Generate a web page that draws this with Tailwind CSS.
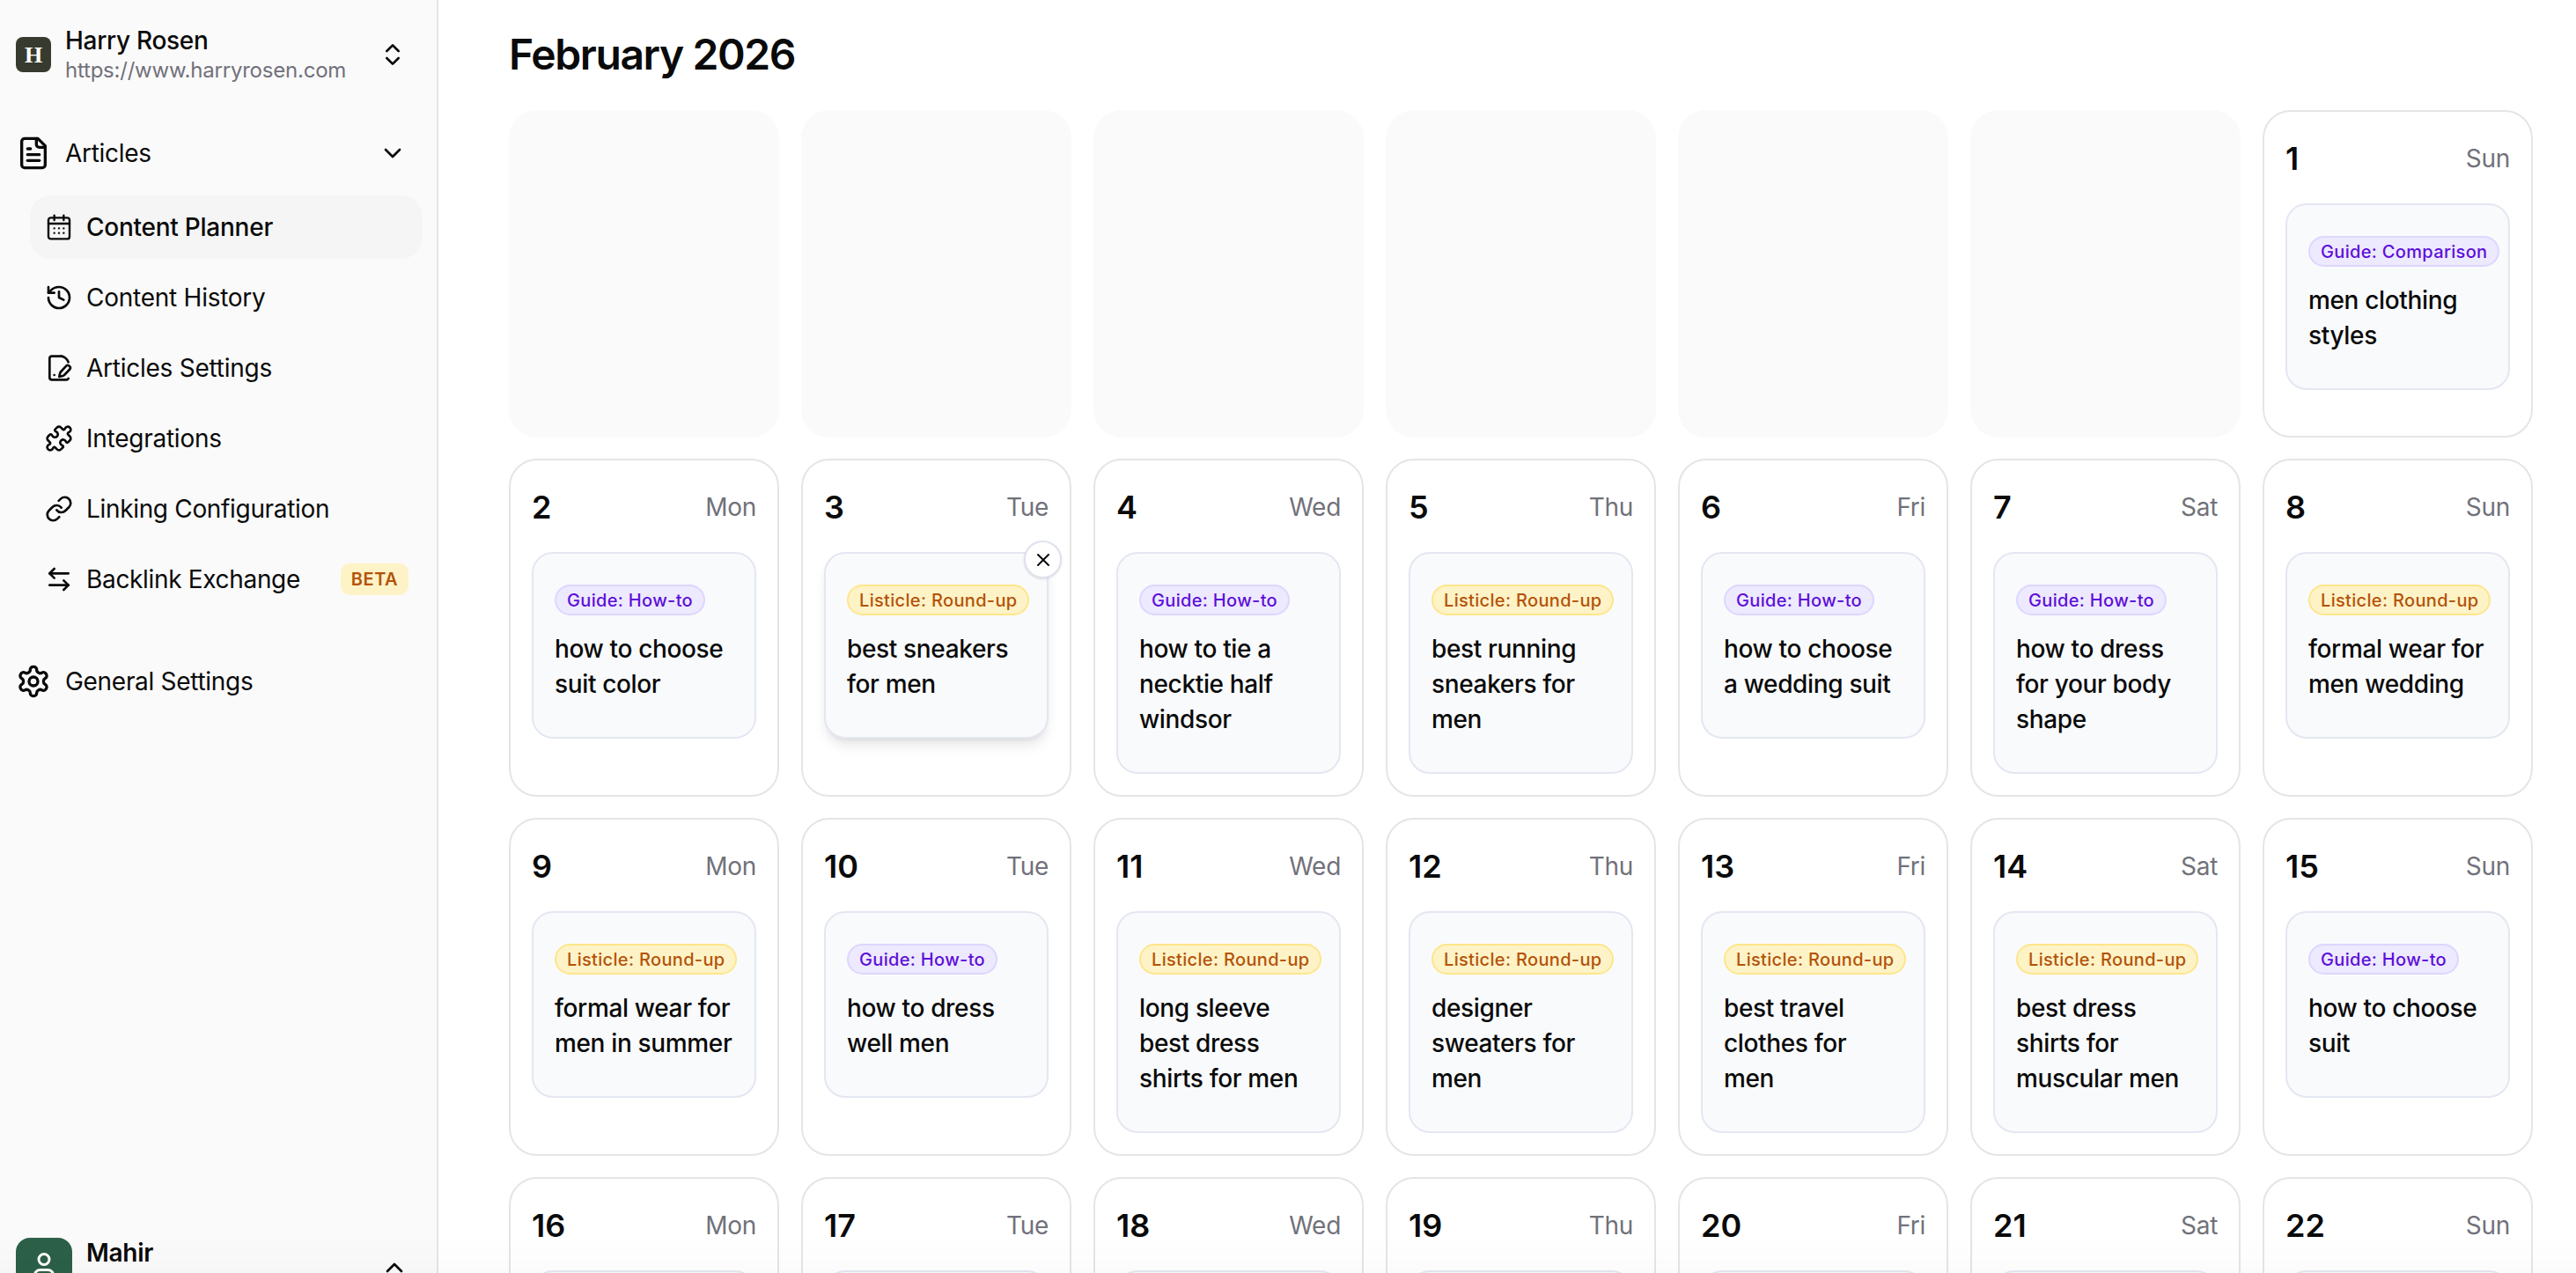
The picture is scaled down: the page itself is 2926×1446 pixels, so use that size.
<!DOCTYPE html>
<html lang="en">
<head>
    <meta charset="UTF-8">
    <title>Content Planner</title>
    <script src="https://cdn.jsdelivr.net/npm/@tailwindcss/browser@4"></script>
</head>
<body class="bg-white h-screen overflow-hidden flex text-[#0a0a0a] font-['Inter',sans-serif]">
    <aside class="w-[498px] h-[1446px] shrink-0 bg-[#fafafa] border-r-2 border-[#e5e5e5] flex flex-col relative overflow-hidden">
        <div class="flex items-center h-[68px] mt-[28px] pl-[18px] pr-[34px]">
            <div class="w-[40px] h-[40px] rounded-[8px] bg-[#373b2f] text-white flex items-center justify-center text-[26px] font-bold font-['Liberation_Serif',serif]">H</div>
            <div class="ml-[16px] flex-1 pt-[2px]">
                <div class="text-[28px] leading-[34px] font-medium tracking-[-0.3px]">Harry Rosen</div>
                <div class="text-[24px] leading-[34px] text-[#71717a] tracking-[-0.22px]">https://www.harryrosen.com</div>
            </div>
            <svg class="w-[32px] h-[32px]" viewBox="0 0 24 24" fill="none" stroke="currentColor" stroke-width="2" stroke-linecap="round" stroke-linejoin="round"><path d="m7 15 5 5 5-5"/><path d="m7 9 5-5 5 5"/></svg>
        </div>
        <div class="flex items-center h-[72px] mt-[42px] pl-[18px] pr-[34px]">
            <svg class="w-[40px] h-[40px]" viewBox="0 0 24 24" fill="none" stroke="currentColor" stroke-width="2" stroke-linecap="round" stroke-linejoin="round"><path d="M15 2H6a2 2 0 0 0-2 2v16a2 2 0 0 0 2 2h12a2 2 0 0 0 2-2V7Z"/><path d="M14 2v4a2 2 0 0 0 2 2h4"/><path d="M10 9H8"/><path d="M16 13H8"/><path d="M16 17H8"/></svg>
            <span class="ml-[16px] flex-1 text-[28px] tracking-[-0.3px]">Articles</span>
            <svg class="w-[32px] h-[32px]" viewBox="0 0 24 24" fill="none" stroke="currentColor" stroke-width="2" stroke-linecap="round" stroke-linejoin="round"><path d="m6 9 6 6 6-6"/></svg>
        </div>
        <nav class="flex flex-col gap-[8px] mt-[12px] ml-[34px] mr-[16px] tracking-[-0.25px]">
            <a class="flex items-center h-[72px] rounded-[24px] bg-[#f5f5f5] pl-[17px]">
                <svg class="w-[32px] h-[32px]" viewBox="0 0 24 24" fill="none" stroke="currentColor" stroke-width="1.8" stroke-linecap="round" stroke-linejoin="round"><rect x="3" y="4" width="18" height="18" rx="2"/><path d="M8 2v4"/><path d="M16 2v4"/><path d="M3 9h18"/><path d="M8 13h.01M12 13h.01M16 13h.01M8 17h.01M12 17h.01M16 17h.01"/></svg>
                <span class="ml-[15px] text-[28px] font-medium">Content Planner</span>
            </a>
            <a class="flex items-center h-[72px] pl-[17px]">
                <svg class="w-[32px] h-[32px]" viewBox="0 0 24 24" fill="none" stroke="currentColor" stroke-width="2" stroke-linecap="round" stroke-linejoin="round"><path d="M3 12a9 9 0 1 0 9-9 9.75 9.75 0 0 0-6.74 2.74L3 8"/><path d="M3 3v5h5"/><path d="M12 7v5l4 2"/></svg>
                <span class="ml-[15px] text-[28px]">Content History</span>
            </a>
            <a class="flex items-center h-[72px] pl-[17px]">
                <svg class="w-[32px] h-[32px]" viewBox="0 0 24 24" fill="none" stroke="currentColor" stroke-width="2" stroke-linecap="round" stroke-linejoin="round"><path d="M14 2H6a2 2 0 0 0-2 2v16a2 2 0 0 0 2 2h12a2 2 0 0 0 2-1"/><path d="M14 2c2 0 5 2 6 5"/><path d="M8 18h.01"/><path d="M21 10.5a1.9 1.9 0 0 0-2.8-.3l-4.6 5a3 3 0 0 0-.7 1.3l-.7 2.9 3-.7a3 3 0 0 0 1.3-.7l4.7-4.9a1.9 1.9 0 0 0-.2-2.6Z"/></svg>
                <span class="ml-[15px] text-[28px]">Articles Settings</span>
            </a>
            <a class="flex items-center h-[72px] pl-[17px]">
                <svg class="w-[32px] h-[32px]" viewBox="0 0 24 24" fill="none" stroke="currentColor" stroke-width="2" stroke-linecap="round" stroke-linejoin="round"><path d="M19.439 7.85c-.049.322.059.648.289.878l1.568 1.568c.47.47.706 1.087.706 1.704s-.235 1.233-.706 1.704l-1.611 1.611a.98.98 0 0 1-.837.276c-.47-.07-.802-.48-.968-.925a2.501 2.501 0 1 0-3.214 3.214c.446.166.855.497.925.968a.979.979 0 0 1-.276.837l-1.61 1.61a2.404 2.404 0 0 1-1.705.707 2.402 2.402 0 0 1-1.704-.706l-1.568-1.568a1.026 1.026 0 0 0-.877-.29c-.493.074-.84.504-1.02.968a2.5 2.5 0 1 1-3.237-3.237c.464-.18.894-.527.967-1.02a1.026 1.026 0 0 0-.289-.877l-1.568-1.568A2.402 2.402 0 0 1 1.998 12c0-.617.236-1.234.706-1.704L4.23 8.77c.24-.24.581-.353.917-.303.515.077.877.528 1.073 1.01a2.5 2.5 0 1 0 3.259-3.259c-.482-.196-.933-.558-1.01-1.073-.05-.336.062-.676.303-.917l1.525-1.525A2.402 2.402 0 0 1 12 1.998c.617 0 1.234.236 1.704.706l1.568 1.568c.23.23.556.338.877.29.493-.074.84-.504 1.02-.968a2.5 2.5 0 1 1 3.237 3.237c-.464.18-.894.527-.967 1.02Z"/></svg>
                <span class="ml-[15px] text-[28px]">Integrations</span>
            </a>
            <a class="flex items-center h-[72px] pl-[17px]">
                <svg class="w-[32px] h-[32px]" viewBox="0 0 24 24" fill="none" stroke="currentColor" stroke-width="2" stroke-linecap="round" stroke-linejoin="round"><path d="M10 13a5 5 0 0 0 7.54.54l3-3a5 5 0 0 0-7.07-7.07l-1.72 1.71"/><path d="M14 11a5 5 0 0 0-7.54-.54l-3 3a5 5 0 0 0 7.07 7.07l1.71-1.71"/></svg>
                <span class="ml-[15px] text-[28px] tracking-[-0.33px]">Linking Configuration</span>
            </a>
            <a class="flex items-center h-[72px] pl-[17px]">
                <svg class="w-[32px] h-[32px]" viewBox="0 0 24 24" fill="none" stroke="currentColor" stroke-width="2" stroke-linecap="round" stroke-linejoin="round"><path d="M8 3 4 7l4 4"/><path d="M4 7h16"/><path d="m16 21 4-4-4-4"/><path d="M20 17H4"/></svg>
                <span class="ml-[15px] text-[28px] flex-1 tracking-[-0.33px]">Backlink Exchange</span>
                <span class="w-[77px] h-[36px] mr-[16px] rounded-[10px] bg-[#fef3c7] text-[#b45309] text-[20px] font-semibold tracking-[0.5px] flex items-center justify-center">BETA</span>
            </a>
        </nav>
        <div class="flex items-center h-[72px] mt-[44px] pl-[18px] pr-[34px]">
            <svg class="w-[40px] h-[40px]" viewBox="0 0 24 24" fill="none" stroke="currentColor" stroke-width="2" stroke-linecap="round" stroke-linejoin="round"><path d="M12.22 2h-.44a2 2 0 0 0-2 2v.18a2 2 0 0 1-1 1.73l-.43.25a2 2 0 0 1-2 0l-.15-.08a2 2 0 0 0-2.73.73l-.22.38a2 2 0 0 0 .73 2.73l.15.1a2 2 0 0 1 1 1.72v.51a2 2 0 0 1-1 1.74l-.15.09a2 2 0 0 0-.73 2.73l.22.38a2 2 0 0 0 2.73.73l.15-.08a2 2 0 0 1 2 0l.43.25a2 2 0 0 1 1 1.73V20a2 2 0 0 0 2 2h.44a2 2 0 0 0 2-2v-.18a2 2 0 0 1 1-1.73l.43-.25a2 2 0 0 1 2 0l.15.08a2 2 0 0 0 2.73-.73l.22-.39a2 2 0 0 0-.73-2.73l-.15-.08a2 2 0 0 1-1-1.74v-.5a2 2 0 0 1 1-1.74l.15-.09a2 2 0 0 0 .73-2.73l-.22-.38a2 2 0 0 0-2.73-.73l-.15.08a2 2 0 0 1-2 0l-.43-.25a2 2 0 0 1-1-1.73V4a2 2 0 0 0-2-2z"/><circle cx="12" cy="12" r="3"/></svg>
            <span class="ml-[16px] text-[28px] tracking-[-0.3px]">General Settings</span>
        </div>
        <div class="absolute left-[18px] top-[1406px] flex items-start w-[446px]">
            <div class="w-[64px] h-[64px] rounded-[16px] bg-[#2c6048] flex items-center justify-center">
                <svg class="w-[36px] h-[36px]" viewBox="0 0 24 24" fill="none" stroke="white" stroke-width="2" stroke-linecap="round" stroke-linejoin="round"><circle cx="12" cy="7" r="4"/><path d="M19 21v-2a4 4 0 0 0-4-4H9a4 4 0 0 0-4 4v2"/></svg>
            </div>
            <span class="ml-[16px] flex-1 text-[28px] leading-[34px] font-semibold tracking-[-0.3px]">Mahir</span>
            <svg class="w-[32px] h-[32px] mt-[18px]" viewBox="0 0 24 24" fill="none" stroke="currentColor" stroke-width="2" stroke-linecap="round" stroke-linejoin="round"><path d="m18 15-6-6-6 6"/></svg>
        </div>
    </aside>

    <main class="flex-1 pl-[80px] pr-[49px] min-w-0">
        <h1 class="text-[48px] leading-[60px] font-semibold mt-[32px] mb-[33px] tracking-[-1.4px]">February 2026</h1>
        <div id="grid" class="grid grid-cols-7 gap-x-[25px] gap-y-[24px] auto-rows-min"></div>
    </main>

    <!-- faint fade along the bottom of the window -->
    <div class="fixed left-0 right-0 bottom-0 h-[42px] bg-linear-to-b from-transparent to-black/[0.015] pointer-events-none"></div>

    <script>
        const guide = 'border-[#ddd6fe] bg-[#ede9fe] text-[#5d0fd9]';
        const listicle = 'border-[#fde68a] bg-[#fef3c7] text-[#b45309]';
        const days = [
            ['1', 'Sun', 'Guide: Comparison', 'men clothing styles'],
            ['2', 'Mon', 'Guide: How-to', 'how to choose suit color'],
            ['3', 'Tue', 'Listicle: Round-up', 'best sneakers for men'],
            ['4', 'Wed', 'Guide: How-to', 'how to tie a necktie half windsor'],
            ['5', 'Thu', 'Listicle: Round-up', 'best running sneakers for men'],
            ['6', 'Fri', 'Guide: How-to', 'how to choose a wedding suit'],
            ['7', 'Sat', 'Guide: How-to', 'how to dress for your body shape'],
            ['8', 'Sun', 'Listicle: Round-up', 'formal wear for men wedding'],
            ['9', 'Mon', 'Listicle: Round-up', 'formal wear for men in summer'],
            ['10', 'Tue', 'Guide: How-to', 'how to dress well men'],
            ['11', 'Wed', 'Listicle: Round-up', 'long sleeve best dress shirts for men'],
            ['12', 'Thu', 'Listicle: Round-up', 'designer sweaters for men'],
            ['13', 'Fri', 'Listicle: Round-up', 'best travel clothes for men'],
            ['14', 'Sat', 'Listicle: Round-up', 'best dress shirts for muscular men'],
            ['15', 'Sun', 'Guide: How-to', 'how to choose suit'],
            ['16', 'Mon', 'Guide: How-to', 'how to choose suit'],
            ['17', 'Tue', 'Guide: How-to', 'how to choose suit'],
            ['18', 'Wed', 'Guide: How-to', 'how to choose suit'],
            ['19', 'Thu', 'Guide: How-to', 'how to choose suit'],
            ['20', 'Fri', 'Guide: How-to', 'how to choose suit'],
            ['21', 'Sat', 'Guide: How-to', 'how to choose suit'],
            ['22', 'Sun', 'Guide: How-to', 'how to choose suit']
        ];
        const closeBtn = `<button class="absolute top-[-15px] right-[-17px] w-[43px] h-[43px] rounded-full bg-white border-2 border-[#dfe3ee] shadow-sm flex items-center justify-center"><svg class="w-[24px] h-[24px]" viewBox="0 0 24 24" fill="none" stroke="#0a0a0a" stroke-width="2" stroke-linecap="round"><path d="M18 6 6 18"/><path d="m6 6 12 12"/></svg></button>`;

        let html = '';
        for (let i = 0; i < 6; i++) {
            html += '<div class="h-[372px] rounded-[32px] bg-[#fafafa]"></div>';
        }
        for (const [num, day, tag, title] of days) {
            const tagColor = tag.startsWith('Guide') ? guide : listicle;
            const hovered = num === '3';
            html += `<div class="min-h-[372px] rounded-[32px] border-2 border-[#e5e5e5] p-[24px]">
                <div class="flex items-center justify-between h-[58px] mb-[22px]">
                    <span class="text-[36px] font-semibold">${num}</span>
                    <span class="text-[28px] text-[#71717a] tracking-[-0.3px]">${day}</span>
                </div>
                <div class="relative rounded-[24px] border-2 border-[#e4e7f1] bg-[#f9fafc] pt-[35px] pb-[40px] px-[24px] min-h-[211px] ${hovered ? 'shadow-lg' : ''}">
                    ${hovered ? closeBtn : ''}
                    <span class="inline-flex items-center h-[35px] rounded-full border-2 px-[12px] text-[20px] font-medium tracking-[0.33px] whitespace-nowrap ${tagColor}">${tag}</span>
                    <div class="mt-[18px] text-[28px] leading-[40px] font-medium tracking-[-0.35px]">${title}</div>
                </div>
            </div>`;
        }
        document.getElementById('grid').innerHTML = html;
    </script>
</body>
</html>
